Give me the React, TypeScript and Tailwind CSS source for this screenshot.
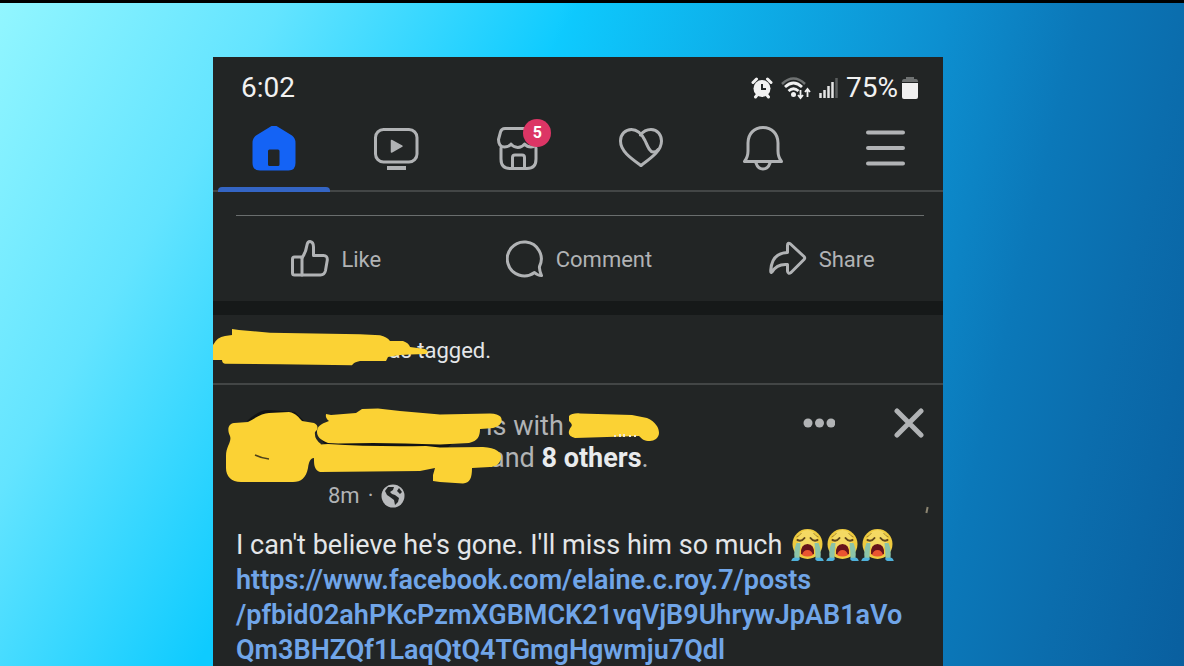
import type { ReactNode } from "react";

type IconProps = {
    children: ReactNode;
    size?: string;
    viewBox?: string;
    strokeWidth?: number;
}

function Icon({ children, size = "size-[46px]", viewBox = "0 0 46 46", strokeWidth = 3 }: IconProps) {
    return (
        <svg viewBox={viewBox} className={`${size} shrink-0`} fill="none" stroke="currentColor" strokeWidth={strokeWidth} strokeLinecap="round" strokeLinejoin="round" aria-hidden="true">
            {children}
        </svg>
    );
}

const tabs = [
    {
        label: "Home",
        icon: (
            <Icon>
                <path fill="#1463f5" stroke="none" fillRule="evenodd" d="M20.5 0Q23 -1.2 25.5 0L41 9.5Q44.5 12 44.5 17V37Q44.5 44.5 37.5 44.5H9Q1.5 44.5 1.5 37V17Q1.5 12 5 9.5ZM18.5 23.5Q17 23.5 17 25V38.5Q17 40 18.5 40H27Q28.5 40 28.5 38.5V25Q28.5 23.5 27 23.5Z" />
            </Icon>
        ),
    },
    {
        label: "Watch",
        icon: (
            <Icon>
                <rect x="2.5" y="3.5" width="41.5" height="32.5" rx="8" />
                <path fill="currentColor" strokeWidth="1.5" d="M18.5 14.5V26L29 20.2Z" />
                <path strokeLinecap="butt" strokeWidth="4" d="M14 42H33" />
            </Icon>
        ),
    },
    {
        label: "Marketplace",
        badge: 5,
        icon: (
            <Icon>
                <path d="M38 2.5H10Q6.5 2.5 5.5 6L3.5 13.5Q3.5 21 9.5 21Q14 21 16 18Q18.5 21.5 22.8 21.5T29.5 18Q32 21 36 21Q42 21 42 14" />
                <path d="M6 22V33Q6 42.5 15 42.5H32Q41 42.5 41 33V22" />
                <path d="M17.5 42V31.5Q17.5 29 20 29H27Q29.5 29 29.5 31.5V42" />
            </Icon>
        ),
    },
    {
        label: "Dating",
        icon: (
            <Icon>
                <path d="M23 39.5C14 33 2.5 25.5 2.5 15C2.5 8 7.5 3.5 13.5 3.5C20 3.5 24 8.5 27 14.5C29.5 20 31.5 26 35 26C37.5 26 39 25 40 23.5" />
                <path d="M22.5 9C25 5.5 29 3.5 33 3.5C39.5 3.5 43.5 9 43.5 15C43.5 25 33 32 23 39.5" />
            </Icon>
        ),
    },
    {
        label: "Notifications",
        icon: (
            <Icon>
                <path d="M23 1.5C14 1.5 8 8 8 17V25Q8 31 4.5 35.5H41.5Q38 31 38 25V17C38 8 32 1.5 23 1.5Z" />
                <path d="M16 37Q18 43 23 43T30 37" />
            </Icon>
        ),
    },
    {
        label: "Menu",
        icon: (
            <Icon strokeWidth={4}>
                <path d="M6 6.5H41M6 22H41M6 37.5H41" />
            </Icon>
        ),
    },
];

const actions = [
    {
        label: "Like",
        icon: (
            <Icon size="size-[38px]" viewBox="0 0 38 38">
                <path d="M3.5 17H11V35H3.5Q1.5 35 1.5 33V19Q1.5 17 3.5 17Z" />
                <path d="M11 18Q15 12 16 5Q16.5 1.5 19 1.5Q22.5 2 22.5 7V15.5H32.5Q36.5 15.5 36.3 20L34.5 30.5Q33.5 35 29.5 35H11" />
            </Icon>
        ),
    },
    {
        label: "Comment",
        icon: (
            <Icon size="size-[38px]" viewBox="0 0 38 38">
                <path d="M28.5 32.5A17 17 0 1 1 33.5 26.5Q33 29.5 35.5 35.5Q31.5 35.5 28.5 32.5Z" />
            </Icon>
        ),
    },
    {
        label: "Share",
        icon: (
            <Icon size="size-[38px]" viewBox="0 0 38 38">
                <path d="M18.5 5.5Q18.5 2 21.5 4L35 16.5Q36.5 18 35 19.5L22 32.5Q19 34.5 18.5 31V24.5Q8 23.5 3 32Q1.5 33.5 1.8 30Q3 13 18.5 12.5Z" />
            </Icon>
        ),
    },
];

function StatusIcons() {
    return (
        <div className="flex items-center gap-2">
            <svg viewBox="0 0 22 22" className="size-[22px]" aria-hidden="true">
                <circle cx="11" cy="11.5" r="8.5" fill="#f1f1f1" />
                <path d="M2 5.5L5.5 2M20 5.5L16.5 2M4.5 20L6.5 17.5M17.5 20L15.5 17.5" stroke="#f1f1f1" strokeWidth="3" strokeLinecap="round" />
                <path d="M11 7V12H15" stroke="#222525" strokeWidth="2" fill="none" />
            </svg>
            <svg viewBox="0 0 30 24" className="h-6 w-[30px]" fill="none" aria-hidden="true">
                <path d="M1 8Q12.5 -3 24 8" stroke="#6f7272" strokeWidth="2.5" />
                <path d="M4 11Q12.5 3 21 11M7.5 15Q12.5 10.5 17.5 15" stroke="#f1f1f1" strokeWidth="2.8" />
                <circle cx="12.5" cy="18.5" r="2.5" fill="#f1f1f1" />
                <path d="M19.5 14V21.5M17 19L19.5 22L22 19M26.5 21V13M24 16L26.5 13L29 16" stroke="#f1f1f1" strokeWidth="1.8" />
            </svg>
            <svg viewBox="0 0 19 20" className="h-5 w-[19px]" strokeWidth="2.5" aria-hidden="true">
                <path d="M1.5 15V20M5.5 12V20M9.5 8V20M13.5 4V20" stroke="#e4e4e4" />
                <path d="M17.5 0V20" stroke="#5b5e5e" />
            </svg>
        </div>
    );
}

function CryingFace() {
    return (
        <svg viewBox="0 0 34 34" className="inline-block h-[34px] w-[35px] align-[-8px]" role="img" aria-label="crying face">
            <circle cx="17" cy="16" r="15" fill="#efcb3f" />
            <circle cx="17" cy="12" r="10" fill="#f6e37c" opacity="0.6" />
            <path d="M6 15L10 15Q9 24 9 30L6 33H1Q1 31 4 30Q3 22 6 15ZM28 15L24 15Q25 24 25 30L28 33H33Q33 31 30 30Q31 22 28 15Z" fill="#8cc4a8" />
            <path d="M1 33Q1 30 4 29.5L9 30Q10 32 7 33ZM33 33Q33 30 30 29.5L25 30Q24 32 27 33Z" fill="#4fb2dc" />
            <path d="M7 12Q11 14 14 10M20 10Q23 14 27 12" stroke="#5f461c" strokeWidth="2" fill="none" strokeLinecap="round" />
            <path d="M6 9Q9 8 11 5M28 9Q25 8 23 5" stroke="#a98a2c" strokeWidth="1" fill="none" />
            <path d="M10.5 26Q10 16 17 16T23.5 26Q17 30 10.5 26Z" fill="#66131a" />
            <path d="M11.5 27Q13 22 17 22T22.5 27Q17 30 11.5 27Z" fill="#ea5430" />
        </svg>
    );
}

function Globe() {
    return (
        <svg viewBox="0 0 24 24" className="size-6" role="img" aria-label="Public">
            <circle cx="12" cy="12" r="11.5" fill="#b9bbbd" />
            <path d="M4 7L7 3L13 3L12 6L9 8L11 10L14 11L18 14L17 18L14 21L13 16L9 13L6 11ZM18 4L21 8L19 10L16 7Z" fill="#222525" />
        </svg>
    );
}

export default function App() {
    return (
        <div className="flex h-screen flex-col overflow-hidden border-t-[3px] border-black bg-[linear-gradient(103deg,#0ecbff00_42%,#0d8fd0_71%,#0b78b9_81%,#0b6dad_89%,#095f9f_100%),linear-gradient(120deg,#92f6ff_0%,#63e4ff_18%,#0ecbff_37%)] font-['Roboto','Liberation_Sans',sans-serif]">
            <div className="grid flex-1 grid-cols-[213fr_730fr_241fr] pt-[54px]">
                <main className="col-start-2 overflow-hidden bg-[#222525] text-[#e4e6e8]">
                    <header className="border-b-2 border-[#434646]">
                        <div className="flex h-[61px] items-center justify-between pr-[25px] pl-7 text-[28px] text-[#f1f1f1]">
                            <time>6:02</time>
                            <div className="flex items-center gap-1">
                                <StatusIcons />
                                <span className="pl-1">75%</span>
                                <svg viewBox="0 0 16 22" className="h-[22px] w-4" aria-hidden="true">
                                    <path d="M4 0H12V2H14Q16 2 16 5H0Q0 2 2 2H4Z" fill="#6f7272" />
                                    <path d="M0 6H16V20Q16 22 14 22H2Q0 22 0 20Z" fill="#f1f1f1" />
                                </svg>
                            </div>
                        </div>
                        <nav className="-mr-[3px] grid grid-cols-6 text-[#b1b3b5]">
                            {tabs.map((tab, i) => (
                                <button key={tab.label} aria-label={tab.label} className="relative flex h-[72px] cursor-pointer justify-center pt-2">
                                    {tab.icon}
                                    {tab.badge && (
                                        <span className="absolute top-px left-1/2 ml-[5px] flex size-7 items-center justify-center rounded-full bg-[#dc3565] text-base font-bold text-white">{tab.badge}</span>
                                    )}
                                    {i === 0 && <span className="absolute inset-x-[5px] -bottom-[2px] h-[5px] rounded-t-sm bg-[#3465c4]" />}
                                </button>
                            ))}
                        </nav>
                    </header>

                    <section className="pt-[23px]">
                        <hr className="mr-[19px] mb-px ml-[23px] border-[#6a6e6e]" />
                        <div className="grid h-[84px] grid-cols-3 pl-[2px] text-[22px] text-[#b1b3b5]">
                            {actions.map((action) => (
                                <button key={action.label} className="flex cursor-pointer items-center justify-center gap-3">
                                    {action.icon}
                                    {action.label}
                                </button>
                            ))}
                        </div>
                    </section>

                    <section className="relative flex h-[84px] items-center border-t-[14px] border-b-2 border-t-[#161919] border-b-[#434646] pl-[159px] text-[22px]">
                        <p className="pt-[2px]">was tagged.</p>
                        <svg viewBox="0 0 220 68" className="absolute top-px left-0 h-[68px] w-[220px]" aria-hidden="true">
                            <path fill="#fbd234" d="M0 29Q4 21 12 20L19 19V13L26 14L57 16.7L147 18.3L167 19.3Q174 21 177 25H190Q196 27 197 31L212 33Q217 35.5 213 38L197 38.5L187 39L175 41L173 45H147Q141 46 139 49.3L67 48.3L12 47.7Q9 47 9 44H0Z" />
                        </svg>
                    </section>

                    <article>
                        <header className="relative flex items-start">
                            <div className="flex-1 pt-[25px]">
                                <div className="pl-[273px] text-[27px]/8 text-[#b1b3b5]">
                                    <p>is with</p>
                                    <p className="pl-1">and <strong className="font-bold text-[#e9ebed]">8 others</strong>.</p>
                                </div>
                                <p className="flex h-[43px] items-center gap-2 pl-[115px] text-[22px] text-[#b1b3b5]">
                                    8m <span>·</span> <Globe />
                                </p>
                            </div>
                            <svg viewBox="0 0 450 100" className="absolute top-px left-0 h-[100px] w-[450px]" aria-hidden="true">
                                <path fill="#111315" d="M34 35Q46 24 55 24L82 26L92 36ZM102 44L112 59L233 63L240 57L110 54Z" />
                                <g fill="#fbd234">
                                    <path d="M17 50C14 44 15 38 21 37L35 36C44 31 50 27 56 27L76 26C83 27 86 32 89 35L101 37C106 39 105 44 102 46Q101 53 108 58L104 72C97 71 96 76 95 82C93 92 88 96 80 96H28C18 96 13 90 13 82V70C13 60 19 56 17 50Z" />
                                    <path d="M113 28L118 29L143 27L149 23L165 22.5L187 25L227 28.5L277 27.5C288 28 290 32 288 37C284 43 278 42 267 43C267 50 265 55 256 57L227 58.5Q170 56 125 57.5L115 57C107 54 104 50 104 46C104 41 107 38 116 35Q112 32 113 28Z" />
                                    <path d="M100 59L115 58Q160 61 213 60L227 61.5L270 61C283 62 289 66 288 72C287 79 281 81 277 81L259 82C259 92 257 97 250 97.5L227 96L220 95V89L222 82L207 85L107 86C102 84 101 80 101 74Z" />
                                    <path d="M356 30C358 28 362 27 367 27.5L419 29L434 32C443 36 446 42 446 47C446 52 441 55 437 55C431 55 429 53 426 50L362 52C354 50 355 45 358 41C360 39 358 37 356 35Z" />
                                </g>
                                <path d="M42 69Q48 72 56 73" stroke="#4e421a" strokeWidth="1.5" fill="none" />
                                <path d="M402 51V49M407 51V48M411 51V48M417 51V49M422 51V49" stroke="#f2ead0" strokeWidth="2" />
                            </svg>
                            <div className="flex items-center gap-[59px] pt-[23px] pr-[19px] text-[#b1b3b5]">
                                <button aria-label="More options" className="cursor-pointer">
                                    <svg viewBox="0 0 32 10" className="h-[10px] w-8" fill="currentColor" aria-hidden="true">
                                        <circle cx="5" cy="5" r="4.5" />
                                        <circle cx="16.5" cy="5" r="4.5" />
                                        <circle cx="28" cy="5" r="4.5" />
                                    </svg>
                                </button>
                                <button aria-label="Hide post" className="cursor-pointer">
                                    <Icon size="size-[30px]" viewBox="0 0 30 30" strokeWidth={5}>
                                        <path d="M3 3L27 27M27 3L3 27" />
                                    </Icon>
                                </button>
                            </div>
                            <span className="absolute right-[15px] bottom-1 h-[6px] w-[2px] rotate-12 bg-[#8d8672]" />
                        </header>
                        <div className="pt-[11px] pr-5 pl-[23px] text-[27px]/[35px]">
                            <p className="h-[35px] whitespace-nowrap">
                                I can't believe he's gone. I'll miss him so much
                                <span className="ml-2"><CryingFace /><CryingFace /><CryingFace /></span>
                            </p>
                            <a href="#post" className="font-semibold whitespace-nowrap text-[#70a5e8]">
                                https://www.facebook.com/elaine.c.roy.7/posts<br />
                                /pfbid02ahPKcPzmXGBMCK21vqVjB9UhrywJpAB1aVo<br />
                                Qm3BHZQf1LaqQtQ4TGmgHgwmju7Qdl
                            </a>
                        </div>
                    </article>
                </main>
            </div>
        </div>
    );
}
